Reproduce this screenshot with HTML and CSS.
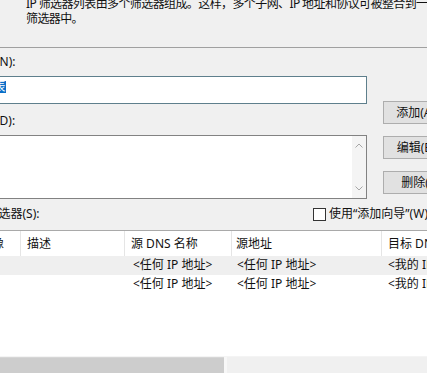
FILE: index.html
```html
<!DOCTYPE html>
<html lang="zh-CN">
<head>
<meta charset="utf-8">
<title>IP 筛选器列表</title>
<link rel="stylesheet" href="styles.css">
</head>
<body>
<div class="dialog">
  <div class="intro">
    <div class="intro-line">IP 筛选器列表由多个筛选器组成。这样，多个子网、IP 地址和协议可被整合到一</div>
    <div class="intro-line">筛选器中。</div>
  </div>
  <div class="form">
    <div class="fields">
      <div class="label">名称(N):</div>
      <div class="input"><span class="sel">IP 列表</span></div>
      <div class="label label-desc">描述(D):</div>
      <div class="textarea">
        <div class="ta-text"></div>
        <div class="vscroll">
          <svg class="chev" width="8" height="5" viewBox="0 0 8 5"><path d="M0.5 4.5 L4 1 L7.5 4.5" fill="none" stroke="#a6a6a6" stroke-width="1"/></svg>
          <svg class="chev" width="8" height="5" viewBox="0 0 8 5"><path d="M0.5 0.5 L4 4 L7.5 0.5" fill="none" stroke="#a6a6a6" stroke-width="1"/></svg>
        </div>
      </div>
    </div>
    <div class="buttons">
      <div class="btn">添加(A)...</div>
      <div class="btn">编辑(E)...</div>
      <div class="btn">删除(R)</div>
    </div>
  </div>
  <div class="filters-row">
    <div class="label filters-label">IP 筛选器(S):</div>
    <div class="check">
      <span class="box"></span>
      <span class="check-text">使用“添加向导”(W)</span>
    </div>
  </div>
  <div class="list">
    <div class="row head">
      <div class="cell c1 first">镜像</div>
      <div class="cell c2">描述</div>
      <div class="cell c3">源 DNS 名称</div>
      <div class="cell c4 h4">源地址</div>
      <div class="cell c5">目标 DNS 名称</div>
    </div>
    <div class="rows">
      <div class="row item alt">
        <div class="cell c1"></div>
        <div class="cell c2"></div>
        <div class="cell c3 v3">&lt;任何 IP 地址&gt;</div>
        <div class="cell c4 v4">&lt;任何 IP 地址&gt;</div>
        <div class="cell c5">&lt;我的 IP 地址&gt;</div>
      </div>
      <div class="row item">
        <div class="cell c1"></div>
        <div class="cell c2"></div>
        <div class="cell c3 v3">&lt;任何 IP 地址&gt;</div>
        <div class="cell c4 v4">&lt;任何 IP 地址&gt;</div>
        <div class="cell c5">&lt;我的 IP 地址&gt;</div>
      </div>
    </div>
    <div class="hscroll">
      <div class="thumb"></div>
      <div class="track"></div>
    </div>
  </div>
</div>
</body>
</html>
```
FILE: styles.css
```css
html, body {
  margin: 0;
  padding: 0;
}
body {
  width: 427px;
  height: 373px;
  overflow: hidden;
  background: #f0f0f0;
  color: #111;
  font-family: "Noto Sans", "Noto Sans CJK SC", sans-serif;
  font-size: 12px;
}
.dialog {
  margin-left: -28px;
  width: 620px;
}
.intro {
  margin-top: -4px;
  height: 52px;
  padding-left: 54px;
  line-height: 15px;
  letter-spacing: -0.6px;
  border-bottom: 1px solid #a0a0a0;
  box-sizing: border-box;
  white-space: nowrap;
}
.form {
  display: flex;
  align-items: flex-start;
}
.fields {
  width: 395px;
  flex: none;
  display: flex;
  flex-direction: column;
}
.label {
  line-height: 14px;
  height: 14px;
  white-space: nowrap;
  margin-top: 7px;
}
.label-desc {
  margin-top: 10px;
}
.input {
  margin-top: 7px;
  height: 28px;
  box-sizing: border-box;
  border: 1px solid #5e7f8c;
  background: #fff;
  padding: 4px 0 0 1px;
  line-height: 12px;
  text-indent: -8px;
}
.sel {
  display: inline-block;
  background: #0a6fc9;
  color: #fff;
  line-height: 12px;
  height: 12px;
  padding: 0 1px;
  text-indent: 0;
}
.textarea {
  margin-top: 7px;
  height: 64px;
  box-sizing: border-box;
  border: 1px solid #828282;
  background: #fff;
  display: flex;
}
.ta-text {
  flex: 1;
}
.vscroll {
  width: 14px;
  background: #f4f4f4;
  display: flex;
  flex-direction: column;
  justify-content: space-between;
  align-items: center;
  padding: 7px 0 7px;
}
.chev {
  display: block;
}
.buttons {
  margin-left: 16px;
  padding-top: 53px;
  display: flex;
  flex-direction: column;
  gap: 12px;
}
.btn {
  width: 75px;
  height: 23px;
  box-sizing: border-box;
  border: 1px solid #adadad;
  background: #e1e1e1;
  text-align: center;
  line-height: 21px;
  white-space: nowrap;
}
.filters-row {
  display: flex;
  align-items: center;
  margin-top: 8px;
  height: 14px;
}
.filters-label {
  margin-top: 0;
  width: 341px;
  flex: none;
}
.check {
  display: flex;
  align-items: center;
  gap: 3px;
  white-space: nowrap;
  line-height: 14px;
}
.box {
  width: 11px;
  height: 11px;
  border: 1px solid #333;
  background: #fff;
}
.list {
  margin-top: 9px;
  border-top: 1px solid #a9a9a9;
  background: #fff;
  height: 142px;
  display: flex;
  flex-direction: column;
}
.row {
  display: flex;
  white-space: nowrap;
}
.head {
  height: 25px;
  line-height: 25px;
}
.head .cell {
  border-right: 1px solid #e5e5e5;
}
.cell {
  flex: none;
  box-sizing: border-box;
  overflow: hidden;
  padding-left: 6px;
}
.c1 { width: 49px; }
.c2 { width: 104px; }
.c3 { width: 107px; }
.c4 { width: 150px; }
.c5 { width: 200px; }
.first { padding-left: 8px; }
.h4 { padding-left: 4px; }
.rows {
  flex: 1;
}
.item {
  height: 18.5px;
  line-height: 18px;
}
.alt {
  background: #efefef;
}
.v3 { padding-left: 8px; }
.v4 { padding-left: 5px; }
.hscroll {
  height: 16px;
  display: flex;
  border-top: 1px solid #f4f4f4;
  margin-top: 3px;
}
.thumb {
  width: 252px;
  flex: none;
  background: #cdcdcd;
  border-top: 1px solid #d6d6d6;
  box-sizing: border-box;
}
.track {
  flex: 1;
  background: #f0f0f0;
  border-left: 3px solid #f7f7f7;
}
```
